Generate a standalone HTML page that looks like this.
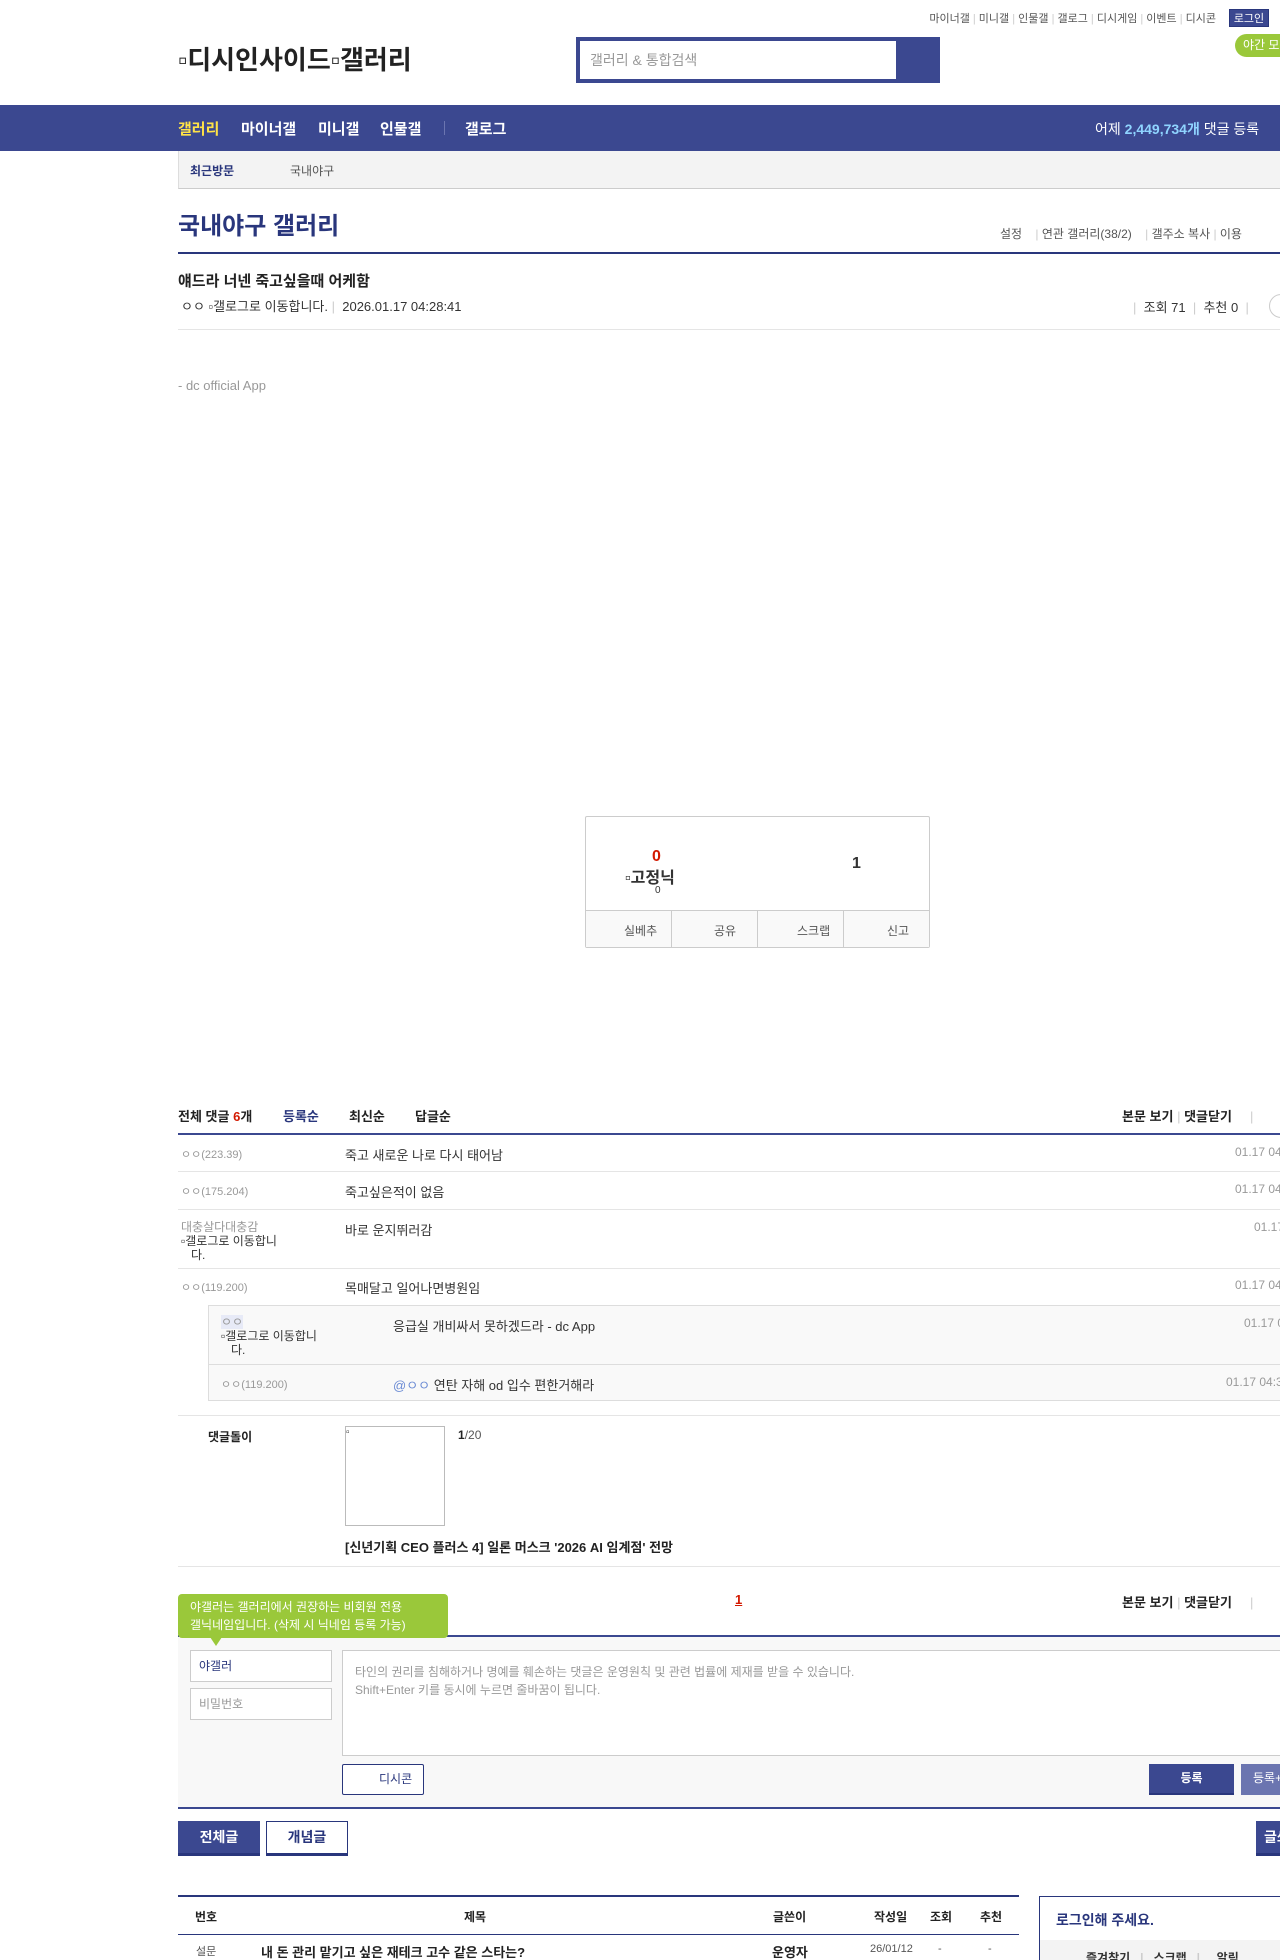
<!DOCTYPE html>
<html><head><meta charset="utf-8">
<style>
*{margin:0;padding:0;box-sizing:border-box}
html,body{width:1280px;height:1960px;overflow:hidden;background:#fff}
body{font-family:"Liberation Sans","Noto Sans CJK KR",sans-serif;color:#333;position:relative;font-size:13px}
.a{position:absolute;white-space:nowrap}
.line{position:absolute;height:1px;background:#e5e5e5}
.g{color:#999}
</style></head><body>

<div class="a" style="left:892px;top:10px;font-size:11px;color:#555;width:324px;text-align:right">마이너갤 <span style="color:#ccc">|</span> 미니갤 <span style="color:#ccc">|</span> 인물갤 <span style="color:#ccc">|</span> 갤로그 <span style="color:#ccc">|</span> 디시게임 <span style="color:#ccc">|</span> 이벤트 <span style="color:#ccc">|</span> 디시콘</div>
<div class="a" style="left:1229px;top:9px;width:40px;height:18px;background:#3b4890;color:#fff;font-size:11px;text-align:center;line-height:18px;border:1px solid #29367c">로그인</div>
<div class="a" style="left:1235px;top:34px;width:60px;height:23px;background:#9ac83a;border-radius:12px;color:#fff;font-size:12px;line-height:23px;padding-left:8px">야간 모드</div>

<div class="a" style="left:178px;top:40px;font-size:26px;font-weight:bold;color:#222">▫디시인사이드▫갤러리</div>

<div class="a" style="left:576px;top:37px;width:364px;height:46px;background:#3b4890"></div>
<div class="a" style="left:580px;top:41px;width:316px;height:38px;background:#fff;color:#999;font-size:14px;line-height:38px;padding-left:10px">갤러리 &amp; 통합검색</div>

<div class="a" style="left:0;top:105px;width:1280px;height:46px;background:#3b4890"></div>
<div class="a" style="left:178px;top:118px;font-size:15px;font-weight:bold;color:#ffe347">갤러리</div>
<div class="a" style="left:241px;top:118px;font-size:15px;font-weight:bold;color:#fff">마이너갤</div>
<div class="a" style="left:318px;top:118px;font-size:15px;font-weight:bold;color:#fff">미니갤</div>
<div class="a" style="left:380px;top:118px;font-size:15px;font-weight:bold;color:#fff">인물갤</div>
<div class="a" style="left:444px;top:121px;width:1px;height:14px;background:#6b75b0"></div>
<div class="a" style="left:465px;top:118px;font-size:15px;font-weight:bold;color:#fff">갤로그</div>
<div class="a" style="left:1095px;top:119px;font-size:14px;color:#fff">어제 <b style="color:#8fd4ff">2,449,734개</b> 댓글 등록</div>

<div class="a" style="left:178px;top:151px;width:1102px;height:38px;background:#f3f3f3;border-left:1px solid #ddd;border-bottom:1px solid #ccc"></div>
<div class="a" style="left:190px;top:162px;font-size:12px;font-weight:bold;color:#29367c">최근방문</div>
<div class="a" style="left:290px;top:162px;font-size:12px;color:#555">국내야구</div>

<div class="a" style="left:178px;top:206px;font-size:24px;font-weight:bold;color:#29367c">국내야구 갤러리</div>
<div class="a" style="left:1000px;top:225px;font-size:12px;color:#555">설정&nbsp;&nbsp;&nbsp;&nbsp;<span style="color:#ccc">|</span> 연관 갤러리(38/2)&nbsp;&nbsp;&nbsp;&nbsp;<span style="color:#ccc">|</span> 갤주소 복사 <span style="color:#ccc">|</span> 이용</div>
<div class="a" style="left:178px;top:252px;width:1102px;height:2px;background:#29367c"></div>

<div class="a" style="left:178px;top:270px;font-size:15px;font-weight:bold;color:#222">얘드라 너넨 죽고싶을때 어케함</div>
<div class="a" style="left:181px;top:296px;font-size:13px;color:#333">ㅇㅇ ▫갤로그로 이동합니다. <span style="color:#ccc">|</span>&nbsp; 2026.01.17 04:28:41</div>
<div class="a" style="left:1133px;top:297px;font-size:13px;color:#333"><span style="color:#ccc">|</span>&nbsp; 조회 71 &nbsp;<span style="color:#ccc">|</span>&nbsp; 추천 0 &nbsp;<span style="color:#ccc">|</span></div>
<div class="a" style="left:1269px;top:294px;width:24px;height:24px;border:1px solid #ccc;border-radius:12px"></div>
<div class="line" style="left:178px;top:329px;width:1102px"></div>

<div class="a g" style="left:178px;top:378px;font-size:13px">- dc official App</div>

<div class="a" style="left:585px;top:816px;width:345px;height:132px;border:1px solid #ccc;border-radius:2px"></div>
<div class="a" style="left:586px;top:911px;width:343px;height:36px;background:#f9f9f9"></div>
<div class="a" style="left:586px;top:910px;width:343px;height:1px;background:#ccc"></div>
<div class="a" style="left:652px;top:848px;font-size:16px;font-weight:bold;color:#d31900">0</div>
<div class="a" style="left:625px;top:864px;font-size:16px;font-weight:bold;color:#333">▫고정닉</div>
<div class="a" style="left:655px;top:885px;font-size:10px;color:#333">0</div>
<div class="a" style="left:852px;top:855px;font-size:16px;font-weight:bold;color:#333">1</div>
<div class="a" style="left:671px;top:911px;width:1px;height:37px;background:#ccc"></div>
<div class="a" style="left:757px;top:911px;width:1px;height:37px;background:#ccc"></div>
<div class="a" style="left:843px;top:911px;width:1px;height:37px;background:#ccc"></div>
<div class="a" style="left:624px;top:922px;font-size:12px;color:#555">실베추</div>
<div class="a" style="left:714px;top:922px;font-size:12px;color:#555">공유</div>
<div class="a" style="left:797px;top:922px;font-size:12px;color:#555">스크랩</div>
<div class="a" style="left:887px;top:922px;font-size:12px;color:#555">신고</div>

<div class="a" style="left:178px;top:1106px;font-size:13px;font-weight:bold;color:#222">전체 댓글 <span style="color:#d31900">6</span>개</div>
<div class="a" style="left:283px;top:1106px;font-size:13px;font-weight:bold;color:#29367c">등록순</div>
<div class="a" style="left:349px;top:1106px;font-size:13px;font-weight:bold;color:#222">최신순</div>
<div class="a" style="left:415px;top:1106px;font-size:13px;font-weight:bold;color:#222">답글순</div>
<div class="a" style="left:1122px;top:1106px;font-size:13px;font-weight:bold;color:#222">본문 보기 <span style="color:#ccc;font-weight:normal">|</span> 댓글닫기 &nbsp;&nbsp;&nbsp;&nbsp;<span style="color:#ccc;font-weight:normal">|</span></div>
<div class="a" style="left:178px;top:1133px;width:1102px;height:2px;background:#3b4890"></div>

<div class="a g" style="left:181px;top:1146px;font-size:11px">ㅇㅇ(223.39)</div>
<div class="a" style="left:345px;top:1145px;font-size:13px">죽고 새로운 나로 다시 태어남</div>
<div class="a g" style="left:1235px;top:1145px;font-size:12px">01.17 04:28</div>
<div class="line" style="left:178px;top:1171px;width:1102px"></div>

<div class="a g" style="left:181px;top:1183px;font-size:11px">ㅇㅇ(175.204)</div>
<div class="a" style="left:345px;top:1182px;font-size:13px">죽고싶은적이 없음</div>
<div class="a g" style="left:1235px;top:1182px;font-size:12px">01.17 04:29</div>
<div class="line" style="left:178px;top:1209px;width:1102px"></div>

<div class="a g" style="left:181px;top:1220px;font-size:12px;line-height:14px">대충살다대충감<br><span style="color:#333">▫갤로그로 이동합니<br>&nbsp;&nbsp;&nbsp;다.</span></div>
<div class="a" style="left:345px;top:1220px;font-size:13px">바로 운지뛰러감</div>
<div class="a g" style="left:1254px;top:1220px;font-size:12px">01.17</div>
<div class="line" style="left:178px;top:1268px;width:1102px"></div>

<div class="a g" style="left:181px;top:1279px;font-size:11px">ㅇㅇ(119.200)</div>
<div class="a" style="left:345px;top:1278px;font-size:13px">목매달고 일어나면병원임</div>
<div class="a g" style="left:1235px;top:1278px;font-size:12px">01.17 04:30</div>

<div class="a" style="left:208px;top:1305px;width:1072px;height:96px;background:#f9f9f9;border:1px solid #ddd;border-right:none"></div>
<div class="a" style="left:209px;top:1364px;width:1071px;height:1px;background:#ddd"></div>
<div class="a" style="left:221px;top:1315px;font-size:12px;line-height:14px;color:#333"><span style="background:#e7eaf7;color:#999">ㅇㅇ</span><br>▫갤로그로 이동합니<br>&nbsp;&nbsp;&nbsp;다.</div>
<div class="a" style="left:393px;top:1316px;font-size:13px">응급실 개비싸서 못하겠드라 - dc App</div>
<div class="a g" style="left:1244px;top:1316px;font-size:12px">01.17 04:31</div>
<div class="a g" style="left:221px;top:1376px;font-size:11px">ㅇㅇ(119.200)</div>
<div class="a" style="left:393px;top:1375px;font-size:13px"><span style="color:#6b8bd4">@ㅇㅇ</span> 연탄 자해 od 입수 편한거해라</div>
<div class="a g" style="left:1226px;top:1375px;font-size:12px">01.17 04:32</div>

<div class="line" style="left:178px;top:1415px;width:1102px"></div>
<div class="a" style="left:208px;top:1428px;font-size:12px;font-weight:bold;color:#222">댓글돌이</div>
<div class="a" style="left:345px;top:1426px;width:100px;height:100px;border:1px solid #bbb;font-size:10px">▫</div>
<div class="a" style="left:458px;top:1428px;font-size:12px;color:#555"><b style="color:#222">1</b>/20</div>
<div class="a" style="left:345px;top:1537px;font-size:13px;font-weight:bold;color:#222">[신년기획 CEO 플러스 4] 일론 머스크 '2026 AI 임계점' 전망</div>
<div class="line" style="left:178px;top:1566px;width:1102px"></div>

<div class="a" style="left:735px;top:1592px;font-size:13px;font-weight:bold;color:#d31900;text-decoration:underline">1</div>
<div class="a" style="left:1122px;top:1592px;font-size:13px;font-weight:bold;color:#222">본문 보기 <span style="color:#ccc;font-weight:normal">|</span> 댓글닫기 &nbsp;&nbsp;&nbsp;&nbsp;<span style="color:#ccc;font-weight:normal">|</span></div>
<div class="a" style="left:178px;top:1635px;width:1102px;height:2px;background:#3b4890"></div>

<div class="a" style="left:178px;top:1637px;width:1102px;height:171px;background:#f8f8f8"></div>
<div class="a" style="left:178px;top:1594px;width:270px;height:44px;background:#9ac83a;border-radius:4px;color:#fff;font-size:12px;line-height:18px;padding:4px 12px">야갤러는 갤러리에서 권장하는 비회원 전용<br>갤닉네임입니다. (삭제 시 닉네임 등록 가능)</div>
<div class="a" style="left:210px;top:1637px;width:0;height:0;border-left:6px solid transparent;border-right:6px solid transparent;border-top:9px solid #9ac83a"></div>
<div class="a" style="left:190px;top:1650px;width:142px;height:32px;background:#fff;border:1px solid #ccc;font-size:12px;line-height:30px;padding-left:8px;color:#29367c">야갤러</div>
<div class="a" style="left:190px;top:1688px;width:142px;height:32px;background:#fff;border:1px solid #ccc;font-size:12px;line-height:30px;padding-left:8px;color:#999">비밀번호</div>
<div class="a" style="left:342px;top:1650px;width:938px;height:106px;background:#fff;border:1px solid #ccc;border-right:none;font-size:12px;line-height:18px;padding:12px 12px;color:#999">타인의 권리를 침해하거나 명예를 훼손하는 댓글은 운영원칙 및 관련 법률에 제재를 받을 수 있습니다.<br>Shift+Enter 키를 동시에 누르면 줄바꿈이 됩니다.</div>
<div class="a" style="left:342px;top:1764px;width:82px;height:31px;background:#fff;border:1px solid #29367c;border-radius:2px;font-size:12px;line-height:29px;padding-left:36px;color:#29367c">디시콘</div>
<div class="a" style="left:1149px;top:1764px;width:85px;height:31px;background:#3b4890;border-bottom:2px solid #29367c;color:#fff;font-size:12px;font-weight:bold;line-height:29px;text-align:center">등록</div>
<div class="a" style="left:1241px;top:1764px;width:60px;height:31px;background:#6b75b0;color:#fff;font-size:12px;line-height:29px;padding-left:12px">등록+추천</div>
<div class="a" style="left:178px;top:1807px;width:1102px;height:2px;background:#3b4890"></div>

<div class="a" style="left:178px;top:1821px;width:82px;height:35px;background:#3b4890;border-bottom:3px solid #29367c;color:#fff;font-size:14px;font-weight:bold;line-height:32px;text-align:center">전체글</div>
<div class="a" style="left:266px;top:1821px;width:82px;height:35px;background:#fff;border:1px solid #29367c;border-bottom:3px solid #29367c;color:#29367c;font-size:14px;font-weight:bold;line-height:31px;text-align:center">개념글</div>
<div class="a" style="left:1256px;top:1821px;width:60px;height:35px;background:#3b4890;border-bottom:3px solid #29367c;color:#fff;font-size:14px;font-weight:bold;line-height:32px;padding-left:8px">글쓰기</div>

<div class="a" style="left:178px;top:1895px;width:841px;height:2px;background:#29367c"></div>
<div class="a" style="left:195px;top:1908px;font-size:12px;font-weight:bold;color:#222">번호</div>
<div class="a" style="left:464px;top:1908px;font-size:12px;font-weight:bold;color:#222">제목</div>
<div class="a" style="left:773px;top:1908px;font-size:12px;font-weight:bold;color:#222">글쓴이</div>
<div class="a" style="left:874px;top:1908px;font-size:12px;font-weight:bold;color:#222">작성일</div>
<div class="a" style="left:930px;top:1908px;font-size:12px;font-weight:bold;color:#222">조회</div>
<div class="a" style="left:980px;top:1908px;font-size:12px;font-weight:bold;color:#222">추천</div>
<div class="a" style="left:178px;top:1934px;width:841px;height:1px;background:#29367c"></div>
<div class="a" style="left:196px;top:1943px;font-size:11px;color:#555">설문</div>
<div class="a" style="left:261px;top:1942px;font-size:13px;font-weight:bold;color:#222">내 돈 관리 맡기고 싶은 재테크 고수 같은 스타는?</div>
<div class="a" style="left:772px;top:1942px;font-size:13px;font-weight:bold;color:#222">운영자</div>
<div class="a" style="left:870px;top:1943px;font-size:11px;color:#555">26/01/12</div>
<div class="a" style="left:938px;top:1943px;font-size:11px;color:#555">-</div>
<div class="a" style="left:988px;top:1943px;font-size:11px;color:#555">-</div>

<div class="a" style="left:1039px;top:1896px;width:260px;height:80px;border:1px solid #29367c"></div>
<div class="a" style="left:1056px;top:1910px;font-size:14px;font-weight:bold;color:#29367c">로그인해 주세요.</div>
<div class="a" style="left:1040px;top:1940px;width:260px;height:30px;background:#f3f3f3"></div>
<div class="a" style="left:1086px;top:1949px;font-size:12px;font-weight:bold;color:#333">즐겨찾기&nbsp;&nbsp; <span style="color:#ccc">|</span> &nbsp;&nbsp;스크랩 &nbsp;&nbsp;<span style="color:#ccc">|</span>&nbsp;&nbsp;&nbsp;&nbsp; 알림</div>

</body></html>
